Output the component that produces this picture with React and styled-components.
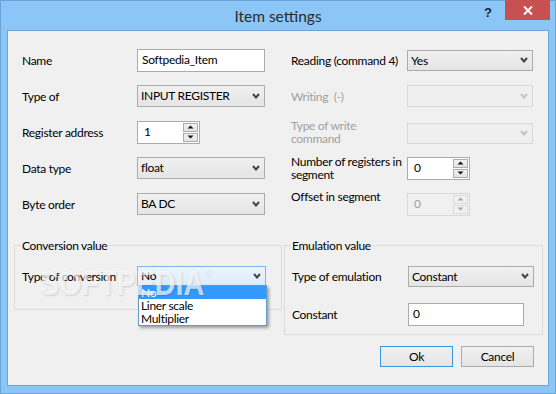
import styled, { createGlobalStyle } from "styled-components";

const frameBlue = "#8bc6f7";
const frameEdge = "#6aa5d8";
const clientBg = "#f0f0f0";
const fieldBorder = "#ababab";
const comboBorder = "#acacac";
const disabledText = "#a0a0a0";
const groupLine = "#dcdcdc";
const uiFont = `Lato, "Noto Sans", sans-serif`;

const GlobalStyle = createGlobalStyle`
  body {
    margin: 0;
    background: ${frameBlue};
    font-family: ${uiFont};
  }
`;

const Window = styled.div`
  width: 556px;
  height: 394px;
  box-sizing: border-box;
  border: 1px solid ${frameEdge};
  background: ${frameBlue};
  display: flex;
  flex-direction: column;
`;

const TitleBar = styled.div`
  height: 29px;
  display: grid;
  grid-template-columns: 1fr auto 1fr;
  align-items: start;
`;

const Title = styled.div`
  grid-column: 2;
  font-size: 15.5px;
  line-height: 15px;
  padding-top: 8px;
  color: #2b2b2b;
`;

const Caption = styled.div`
  grid-column: 3;
  justify-self: end;
  display: flex;
  align-items: flex-start;
  margin-right: 5px;
`;

const HelpButton = styled.div`
  width: 30px;
  font-family: "Liberation Sans", sans-serif;
  font-weight: bold;
  font-size: 13px;
  line-height: 13px;
  padding-top: 5px;
  color: #222;
  text-align: center;
  margin-right: 2px;
`;

const CloseButton = styled.div`
  width: 45px;
  height: 20px;
  margin-top: -1px;
  background: #c75050;
  display: flex;
  align-items: center;
  justify-content: center;
`;

const Client = styled.div`
  position: relative;
  margin: 0 6px 7px 6px;
  width: 542px;
  height: 356px;
  box-sizing: border-box;
  border: 1px solid #6ea5d7;
  background: ${clientBg};
  font-size: 12px;
  letter-spacing: -0.3px;
  color: #000;
`;

const FormGrid = styled.div`
  margin-top: 11px;
  padding-left: 14px;
  display: grid;
  grid-template-columns: 115px 128px 26px 116px 126px;
  grid-auto-rows: 36px;
  align-items: center;
`;

const Label = styled.div`
  grid-column: ${(p) => p.$col || "auto"};
  line-height: 13px;
  white-space: nowrap;
  color: ${(p) => (p.$disabled ? disabledText : "#000")};
  align-self: ${(p) => (p.$top ? "start" : "center")};
  margin-top: ${(p) => (p.$top ? "4px" : "0")};
`;

const Cell = styled.div`
  grid-column: ${(p) => p.$col || "auto"};
  position: relative;
  margin-top: ${(p) => p.$shift || 0}px;
`;

const TextBox = styled.div`
  width: ${(p) => p.$w}px;
  height: 23px;
  box-sizing: border-box;
  border: 1px solid ${fieldBorder};
  background: #fff;
  padding: 0 4px;
  line-height: 20px;
`;

const Combo = styled.div`
  position: relative;
  width: ${(p) => p.$w}px;
  height: ${(p) => p.$h || 22}px;
  box-sizing: border-box;
  border: 1px solid ${(p) => (p.$open ? "#7eb4ea" : p.$disabled ? "#d9d9d9" : comboBorder)};
  background: ${(p) =>
    p.$open
      ? "linear-gradient(#ecf4fc, #dcecfc)"
      : p.$disabled
      ? "#efefef"
      : "linear-gradient(#f0f0f0, #e5e5e5)"};
  padding-left: 3px;
  line-height: ${(p) => (p.$h || 22) - 2}px;
  color: ${(p) => (p.$disabled ? disabledText : "#000")};
`;

const Arrow = styled.svg`
  position: absolute;
  right: 4px;
  top: 50%;
  margin-top: -3px;
`;

const Spin = styled.div`
  position: relative;
  width: 63px;
  height: 23px;
  box-sizing: border-box;
  border: 1px solid ${(p) => (p.$disabled ? "#d9d9d9" : fieldBorder)};
  background: ${(p) => (p.$disabled ? "#f0f0f0" : "#fff")};
  color: ${(p) => (p.$disabled ? disabledText : "#000")};
  padding-left: 6px;
  line-height: 20px;
  display: flex;
  justify-content: space-between;
`;

const SpinButtons = styled.div`
  display: flex;
  flex-direction: column;
  gap: 1px;
  padding: 1px 1px 0 0;
`;

const SpinButton = styled.div`
  width: 15px;
  height: 9px;
  box-sizing: border-box;
  border: 1px solid ${(p) => (p.$disabled ? "#dcdcdc" : comboBorder)};
  background: ${(p) => (p.$disabled ? "#f0f0f0" : "linear-gradient(#f2f2f2, #e3e3e3)")};
  display: flex;
  align-items: center;
  justify-content: center;
`;

const Bottom = styled.div`
  margin-top: 17px;
  padding-left: 6px;
  display: flex;
  gap: 2px;
`;

const Group = styled.fieldset`
  margin: 0;
  min-width: 0;
  width: ${(p) => p.$w}px;
  box-sizing: border-box;
  border: 1px solid ${groupLine};
  padding: 5px 6px ${(p) => p.$pb}px 6px;
  align-self: flex-start;
`;

const Legend = styled.legend`
  padding: 0 1px;
  font-size: 12px;
  line-height: 13px;
`;

const GroupGrid = styled.div`
  display: grid;
  grid-template-columns: ${(p) => p.$cols};
  grid-auto-rows: 38px;
  align-items: center;
  padding-left: 1px;
`;

const RightColumn = styled.div`
  display: flex;
  flex-direction: column;
`;

const ButtonRow = styled.div`
  display: flex;
  justify-content: flex-end;
  gap: 8px;
  margin-top: 11px;
  padding-right: 9px;
`;

const Button = styled.div`
  width: 73px;
  height: 21px;
  box-sizing: border-box;
  border: 1px solid ${(p) => (p.$default ? "#3c95e0" : comboBorder)};
  background: linear-gradient(#f0f0f0, #e5e5e5);
  text-align: center;
  line-height: 19px;
`;

const DropList = styled.div`
  position: absolute;
  top: 100%;
  left: 0;
  width: 129px;
  box-sizing: border-box;
  border: 1px solid #5f9ad3;
  background: #fff;
  box-shadow: 2px 2px 3px rgba(0, 0, 0, 0.35);
  z-index: 2;
`;

const DropItem = styled.div`
  height: 13px;
  line-height: 13px;
  padding-left: 2px;
  background: ${(p) => (p.$active ? "#3399ff" : "transparent")};
  color: ${(p) => (p.$active ? "#fff" : "#000")};
`;

const Watermark = styled.div`
  position: absolute;
  left: 32px;
  top: 234px;
  font-family: "Liberation Sans", sans-serif;
  font-weight: bold;
  font-size: 35px;
  line-height: 36px;
  letter-spacing: 0;
  color: rgba(255, 255, 255, 0.7);
  text-shadow: 1px 1px 2px rgba(0, 0, 0, 0.14);
  transform: scaleX(0.82);
  transform-origin: left top;
  pointer-events: none;
  z-index: 3;
  white-space: nowrap;

  sup {
    font-size: 11px;
    font-weight: normal;
    vertical-align: top;
    line-height: 14px;
  }
`;

function Chevron({ disabled }) {
  return (
    <Arrow width="8" height="6" viewBox="0 0 8 6">
      <path
        d="M1 1 L4 4.5 L7 1"
        fill="none"
        stroke={disabled ? "#c4c4c4" : "#444"}
        strokeWidth="2"
      />
    </Arrow>
  );
}

function Select({ w, h, value, disabled, open, children }) {
  return (
    <Combo $w={w} $h={h} $disabled={disabled} $open={open}>
      {value}
      <Chevron disabled={disabled} />
      {children}
    </Combo>
  );
}

function Triangle({ down, disabled }) {
  return (
    <svg width="7" height="4" viewBox="0 0 7 4">
      <path
        d={down ? "M0.5 0.5 L6.5 0.5 L3.5 3.5 Z" : "M0.5 3.5 L6.5 3.5 L3.5 0.5 Z"}
        fill={disabled ? "#a8a8a8" : "#111"}
      />
    </svg>
  );
}

function SpinBox({ value, disabled }) {
  return (
    <Spin $disabled={disabled}>
      {value}
      <SpinButtons>
        <SpinButton $disabled={disabled}>
          <Triangle disabled={disabled} />
        </SpinButton>
        <SpinButton $disabled={disabled}>
          <Triangle down disabled={disabled} />
        </SpinButton>
      </SpinButtons>
    </Spin>
  );
}

function App() {
  return (
    <>
      <GlobalStyle />
      <Window>
        <TitleBar>
          <Title>Item settings</Title>
          <Caption>
            <HelpButton>?</HelpButton>
            <CloseButton>
              <svg width="10" height="9" viewBox="0 0 10 9">
                <path d="M1 0.5 L9 8.5 M9 0.5 L1 8.5" stroke="#fff" strokeWidth="2" />
              </svg>
            </CloseButton>
          </Caption>
        </TitleBar>

        <Client>
          <FormGrid>
            <Label $col={1}>Name</Label>
            <Cell $col={2}>
              <TextBox $w={128}>Softpedia_Item</TextBox>
            </Cell>
            <Label $col={4}>Reading (command 4)</Label>
            <Cell $col={5}>
              <Select w={126} h={21} value="Yes" />
            </Cell>

            <Label $col={1}>Type of</Label>
            <Cell $col={2}>
              <Select w={128} value="INPUT REGISTER" />
            </Cell>
            <Label $col={4} $disabled>
              Writing&nbsp; (-)
            </Label>
            <Cell $col={5}>
              <Select w={126} disabled />
            </Cell>

            <Label $col={1}>Register address</Label>
            <Cell $col={2}>
              <SpinBox value="1" />
            </Cell>
            <Label $col={4} $disabled>
              Type of write
              <br />
              command
            </Label>
            <Cell $col={5} $shift={2}>
              <Select w={126} h={21} disabled />
            </Cell>

            <Label $col={1}>Data type</Label>
            <Cell $col={2}>
              <Select w={128} value="float" />
            </Cell>
            <Label $col={4}>
              Number of registers in
              <br />
              segment
            </Label>
            <Cell $col={5}>
              <SpinBox value="0" />
            </Cell>

            <Label $col={1}>Byte order</Label>
            <Cell $col={2}>
              <Select w={128} value="BA DC" />
            </Cell>
            <Label $col={4} $top>
              Offset in segment
            </Label>
            <Cell $col={5}>
              <SpinBox value="0" disabled />
            </Cell>
          </FormGrid>

          <Bottom>
            <Group $w={268} $pb={14}>
              <Legend>Conversion value</Legend>
              <GroupGrid $cols="115px 129px">
                <Label>Type of conversion</Label>
                <Cell>
                  <Select w={129} h={20} value="No" open>
                    <DropList>
                      <DropItem $active>No</DropItem>
                      <DropItem>Liner scale</DropItem>
                      <DropItem>Multiplier</DropItem>
                    </DropList>
                  </Select>
                </Cell>
              </GroupGrid>
            </Group>

            <RightColumn>
              <Group $w={259} $pb={1}>
                <Legend>Emulation value</Legend>
                <GroupGrid $cols="116px 126px">
                  <Label>Type of emulation</Label>
                  <Cell>
                    <Select w={126} h={21} value="Constant" />
                  </Cell>
                  <Label>Constant</Label>
                  <Cell>
                    <TextBox $w={116}>0</TextBox>
                  </Cell>
                </GroupGrid>
              </Group>
              <ButtonRow>
                <Button $default>Ok</Button>
                <Button>Cancel</Button>
              </ButtonRow>
            </RightColumn>
          </Bottom>

          <Watermark>
            SOFTPEDIA<sup>®</sup>
          </Watermark>
        </Client>
      </Window>
    </>
  );
}

export default App;
